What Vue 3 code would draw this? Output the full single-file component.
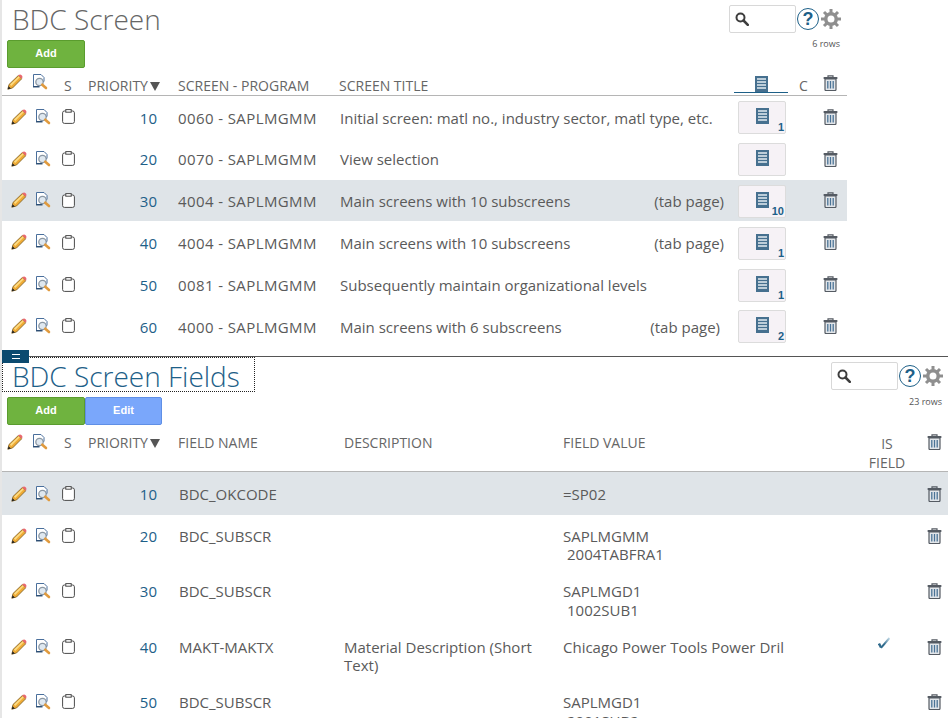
<script setup>
const screens = [
  { pri: 10, prog: "0060 - SAPLMGMM", title: "Initial screen: matl no., industry sector, matl type, etc.", tag: "", count: "1" },
  { pri: 20, prog: "0070 - SAPLMGMM", title: "View selection", tag: "", count: "" },
  { pri: 30, prog: "4004 - SAPLMGMM", title: "Main screens with 10 subscreens", tag: "(tab page)", count: "10", active: true },
  { pri: 40, prog: "4004 - SAPLMGMM", title: "Main screens with 10 subscreens", tag: "(tab page)", count: "1" },
  { pri: 50, prog: "0081 - SAPLMGMM", title: "Subsequently maintain organizational levels", tag: "", count: "1" },
  { pri: 60, prog: "4000 - SAPLMGMM", title: "Main screens with 6 subscreens", tag: "(tab page)", count: "2", shifted: true },
];

const fields = [
  { pri: 10, name: "BDC_OKCODE", desc: "", value: ["=SP02"], active: true },
  { pri: 20, name: "BDC_SUBSCR", desc: "", value: ["SAPLMGMM", "2004TABFRA1"] },
  { pri: 30, name: "BDC_SUBSCR", desc: "", value: ["SAPLMGD1", "1002SUB1"] },
  { pri: 40, name: "MAKT-MAKTX", desc: "Material Description (Short Text)", value: ["Chicago Power Tools Power Dril"], check: true },
  { pri: 50, name: "BDC_SUBSCR", desc: "", value: ["SAPLMGD1", "2001SUB2"] },
];
</script>

<template>
  <svg class="defs" width="0" height="0">
    <defs>
      <linearGradient id="check-fade" x1="0" y1="1" x2="1" y2="0">
        <stop offset="0.35" stop-color="#2f6a8c" />
        <stop offset="1" stop-color="#c4dbe8" />
      </linearGradient>
    </defs>
    <symbol id="pencil" viewBox="0 0 16 16">
      <path d="M.8 15.200l1.200-4.700 9.300-9 3.400 3.300-9.200 9.200z" fill="#f0ab35" stroke="#7a5c20" stroke-width=".8" />
      <path d="M3 10.600l8.800-8.300 1 1L4.200 12z" fill="#fcdc84" />
      <path d="M11.200 1.600Q13 -.2 14.600 1.300t.2 3.500z" fill="#e9686e" />
      <path d="M.8 15.200l.8-3 2.300 2.200z" fill="#222" />
    </symbol>
    <symbol id="inspect" viewBox="0 0 16 16">
      <path d="M1.500.5h7.500l3 3v4H8l-1 5H1.500z" fill="#fff" stroke="#4a6f9c" />
      <path d="M1 12.800h6.500" stroke="#27496d" stroke-width="1.300" />
      <circle cx="7.500" cy="8" r="3.700" fill="#dfe8f0" stroke="#8b97a3" stroke-width="1.300" />
      <path d="M10.300 10.700l3.700 3.300" stroke="#e09a3e" stroke-width="2.600" stroke-linecap="round" />
    </symbol>
    <symbol id="clip" viewBox="0 0 13 15">
      <rect x=".6" y="2" width="11.800" height="12.400" rx="1.800" fill="#fff" stroke="#4a4a4a" stroke-width="1" />
      <rect x="3.800" y=".6" width="5.400" height="2.600" fill="#fff" stroke="#4a4a4a" stroke-width="1" />
    </symbol>
    <symbol id="trash" viewBox="0 0 15 16">
      <path d="M5 2V.8h5V2" fill="none" stroke="#555b63" stroke-width="1.200" />
      <rect x=".5" y="2" width="14" height="2" rx=".8" fill="#555b63" />
      <path d="M2 4h11v10.500q0 1-1 1H3q-1 0-1-1z" fill="#e2e6ea" stroke="#555b63" stroke-width="1.200" />
      <path d="M4.800 6v7.500M7.500 6v7.500M10.200 6v7.500" stroke="#4a7396" stroke-width="1.300" />
    </symbol>
    <symbol id="doc" viewBox="0 0 13 16">
      <rect width="13" height="16" fill="#46708f" />
      <path d="M2 3h9M2 6h9M2 9h9M2 12h9" stroke="#e4ecf2" stroke-width="1.300" />
    </symbol>
    <symbol id="search" viewBox="0 0 14 14">
      <circle cx="5.500" cy="5.500" r="4" fill="none" stroke="#3d3d3d" stroke-width="2" />
      <path d="M8.500 8.500l4.300 4.300" stroke="#3d3d3d" stroke-width="2.600" stroke-linecap="round" />
    </symbol>
    <symbol id="gear" viewBox="0 0 22 22">
      <path d="M11 4a7 7 0 1 0 0 14 7 7 0 0 0 0-14zm0 3.500a3.500 3.500 0 1 1 0 7 3.500 3.500 0 0 1 0-7z" fill="#8f8f8f" fill-rule="evenodd" />
      <path d="M11 5V1M11 21v-4M5 11H1M21 11h-4M6.800 6.800L4 4M18 18l-2.800-2.800M6.800 15.200L4 18M18 4l-2.800 2.800" stroke="#8f8f8f" stroke-width="3" />
    </symbol>
    <symbol id="check" viewBox="0 0 12 12">
      <path d="M1 6.500l2 4" stroke="#2f6a8c" stroke-width="2.400" />
      <path d="M3 10.800L11.500 1" stroke="url(#check-fade)" stroke-width="2" fill="none" />
    </symbol>
  </svg>

  <div class="page">
    <section class="panel top">
      <div class="panel-head">
        <div class="title-box"><h1 class="title">BDC Screen</h1></div>
        <div class="tools">
          <div class="tool-row">
            <div class="search"><svg width="14" height="14"><use href="#search" /></svg></div>
            <span class="help">?</span>
            <svg width="22" height="22"><use href="#gear" /></svg>
          </div>
          <div class="count">6 rows</div>
        </div>
      </div>
      <div class="buttons"><button class="btn add">Add</button></div>

      <div class="thead screens-grid">
        <svg class="h-pencil" width="16" height="16"><use href="#pencil" /></svg>
        <svg class="h-inspect" width="16" height="16"><use href="#inspect" /></svg>
        <span class="h-s">S</span>
        <span class="h-pri">PRIORITY<i class="caret"></i></span>
        <span class="h-left">SCREEN - PROGRAM</span>
        <span>SCREEN TITLE</span>
        <span class="h-doc"><svg width="13" height="16"><use href="#doc" /></svg></span>
        <span class="h-c">C</span>
        <svg class="h-trash" width="15" height="16"><use href="#trash" /></svg>
      </div>

      <div v-for="row in screens" :key="row.pri" class="row screens-grid" :class="{ active: row.active }">
        <svg class="i-pencil" width="16" height="16"><use href="#pencil" /></svg>
        <svg class="i-inspect" width="16" height="16"><use href="#inspect" /></svg>
        <svg class="i-clip" width="13" height="15"><use href="#clip" /></svg>
        <span class="pri">{{ row.pri }}</span>
        <span class="left prog">{{ row.prog }}</span>
        <span class="title-cell" :class="{ shifted: row.shifted }"><span>{{ row.title }}</span><span v-if="row.tag">{{ row.tag }}</span></span>
        <span class="doc-btn">
          <svg width="13" height="16"><use href="#doc" /></svg>
          <b v-if="row.count" class="badge">{{ row.count }}</b>
        </span>
        <span></span>
        <svg class="i-trash" width="15" height="16"><use href="#trash" /></svg>
      </div>
    </section>

    <section class="panel bottom">
      <span class="handle"><i></i></span>
      <div class="panel-head">
        <div class="title-box focus"><h1 class="title blue">BDC Screen Fields</h1></div>
        <div class="tools">
          <div class="tool-row">
            <div class="search"><svg width="14" height="14"><use href="#search" /></svg></div>
            <span class="help">?</span>
            <svg width="22" height="22"><use href="#gear" /></svg>
          </div>
          <div class="count">23 rows</div>
        </div>
      </div>
      <div class="buttons">
        <button class="btn add">Add</button>
        <button class="btn edit">Edit</button>
      </div>

      <div class="thead fields-grid">
        <svg class="h-pencil" width="16" height="16"><use href="#pencil" /></svg>
        <svg class="h-inspect" width="16" height="16"><use href="#inspect" /></svg>
        <span class="h-s">S</span>
        <span class="h-pri">PRIORITY<i class="caret"></i></span>
        <span class="h-left">FIELD NAME</span>
        <span>DESCRIPTION</span>
        <span>FIELD VALUE</span>
        <span class="h-field">IS<br />FIELD</span>
        <svg class="h-trash" width="15" height="16"><use href="#trash" /></svg>
      </div>

      <div v-for="row in fields" :key="row.pri" class="row fields-grid" :class="{ active: row.active }">
        <svg class="i-pencil" width="16" height="16"><use href="#pencil" /></svg>
        <svg class="i-inspect" width="16" height="16"><use href="#inspect" /></svg>
        <svg class="i-clip" width="13" height="15"><use href="#clip" /></svg>
        <span class="pri">{{ row.pri }}</span>
        <span class="left">{{ row.name }}</span>
        <span class="desc">{{ row.desc }}</span>
        <span>
          <span v-for="(line, i) in row.value" :key="i" class="value-line" :class="{ indent: i > 0 }">{{ line }}</span>
        </span>
        <span class="check-cell"><svg v-if="row.check" width="12" height="12"><use href="#check" /></svg></span>
        <svg class="i-trash" width="15" height="16"><use href="#trash" /></svg>
      </div>
    </section>
  </div>
</template>

<style>
html, body { margin: 0; background: #fff; overflow: hidden; }
</style>

<style scoped>
.defs { position: absolute; }
.page {
  width: 948px;
  height: 718px;
  overflow: hidden;
  font-family: "Open Sans", "Noto Sans", sans-serif;
  font-size: 15px;
  line-height: 18.500px;
  color: #5a5a5a;
  box-sizing: border-box;
  border-left: 2px solid #e6e6e6;
}
.panel { position: relative; }
.top { height: 356px; border-bottom: 1px solid #555; width: 946px; }
.bottom { width: 946px; }
.panel-head { display: flex; justify-content: space-between; width: 100%; }
.top .panel-head { width: 844px; height: 40px; }
.bottom .panel-head { height: 40px; }
.title-box { padding: 0 13px 0 10px; height: 35px; }
.title-box.focus { outline: 1px dotted #222; outline-offset: -1px; width: 230px; height: 35px; }
.title {
  margin: 0;
  font-family: "Open Sans", sans-serif;
  font-weight: 300;
  font-size: 28px;
  line-height: 39px;
  color: #666;
  white-space: nowrap;
}
.title.blue { color: #1d6088; }
.tools { display: flex; flex-direction: column; align-items: flex-end; padding: 5px 4px 0 0; }
.tool-row { display: flex; align-items: center; gap: 1px; }
.search {
  height: 26px;
  border: 1px solid #d8d8d8;
  border-radius: 2px;
  display: flex;
  align-items: center;
  padding-left: 5px;
  width: 60px;
}
.help {
  width: 20px;
  height: 20px;
  border: 1.500px solid #1d6088;
  border-radius: 50%;
  color: #1d6088;
  font: bold 18px/20px "Liberation Sans", sans-serif;
  text-align: center;
}
.count { font-size: 9px; line-height: 12px; margin: 5px 2px 0 0; color: #555; }
.bottom .count { margin-top: 6px; }
.buttons { display: flex; padding-left: 5px; height: 29px; }
.btn {
  width: 78px;
  height: 28px;
  border-radius: 2px;
  color: #fff;
  font: bold 11px "Liberation Sans", sans-serif;
  padding: 0 0 2px;
}
.add { background: #6fb33f; border: 1px solid #5a9c2e; }
.edit { background: #7aa7fb; border: 1px solid #5f8fe6; width: 77px; }
.top .thead { height: 27px; width: 845px; }
.thead {
  position: relative;
  align-items: end;
  border-bottom: 1px solid #b5b5b5;
  font-size: 14px;
  color: #666;
  box-sizing: border-box;
}
.bottom .thead { height: 46px; align-items: start; padding-top: 8px; }
.screens-grid {
  display: grid;
  grid-template-columns: 30px 28px 22px 75px 182px 390px 65px 20px 33px;
}
.fields-grid {
  display: grid;
  grid-template-columns: 30px 28px 22px 75px 187px 219px 284px 80px 19px;
}
.row { width: 845px; height: 41.800px; align-items: center; padding-top: 2px; box-sizing: border-box; }
.bottom .row { width: 946px; height: 55.500px; align-items: start; padding-top: 11.500px; }
.bottom .row.active { height: 43px; padding-top: 12.500px; }
.active { background: #dfe4e8; }
.pri { color: #1d6088; text-align: right; }
.left { padding-left: 22px; white-space: nowrap; }
.prog { padding-left: 21px; letter-spacing: .4px; }
.title-cell { display: flex; justify-content: space-between; padding-right: 5px; white-space: nowrap; padding-left: 1px; }
.title-cell.shifted { padding-right: 9px; }
.desc { padding-right: 6px; }
.i-pencil { margin-left: 9px; margin-top: -2px; }
.i-inspect { margin-left: 3px; margin-top: -2px; }
.i-clip { margin-left: 2px; margin-top: -2px; }
.i-trash { margin-left: 9px; margin-top: -2px; }
.bottom .i-pencil, .bottom .i-inspect, .bottom .i-clip, .bottom .i-trash { margin-top: 1px; }
.bottom .i-trash { margin-left: 0; }
.h-pencil { margin-left: 5px; align-self: center; }
.h-inspect { align-self: center; }
.bottom .h-pencil, .bottom .h-inspect, .bottom .h-trash { align-self: start; margin-top: 0; }
.h-s { margin-left: 4px; }
.h-pri { margin-left: 6px; white-space: nowrap; position: relative; }
.h-left { padding-left: 21px; white-space: nowrap; }
.h-doc { text-align: center; border-bottom: 1px solid #1d6088; margin-right: 6px; margin-left: 5px; margin-bottom: 2px; line-height: 0; }
.h-c { margin-left: 5px; }
.h-trash { margin-left: 9px; align-self: center; margin-top: 1px; }
.bottom .h-trash { margin-left: 0; }
.h-field { text-align: center; line-height: 19px; white-space: nowrap; }
.caret {
  display: inline-block;
  border-left: 5.500px solid transparent;
  border-right: 5.500px solid transparent;
  border-top: 9px solid #555;
  margin-left: 2px;
}
.doc-btn {
  position: relative;
  display: flex;
  justify-content: center;
  width: 48px;
  height: 33px;
  margin-left: 9px;
  padding-top: 6px;
  box-sizing: border-box;
  background: #f6f2f6;
  border: 1px solid #dcdcdc;
  border-radius: 2px;
}
.badge {
  position: absolute;
  right: 1px;
  bottom: 0;
  color: #1d6088;
  font: bold 11px/11px "Liberation Sans", sans-serif;
}
.value-line { display: block; }
.value-line.indent { padding-left: 4px; }
.check-cell { text-align: center; padding-right: 6px; line-height: 0; margin-top: -1px; }
.handle {
  position: absolute;
  left: 0;
  top: -7px;
  width: 27px;
  height: 13px;
  background: #0b4a6f;
  display: flex;
  align-items: center;
  justify-content: center;
  z-index: 1;
}
.handle i { width: 8px; height: 3px; border-top: 1px solid #fff; border-bottom: 1px solid #fff; }
</style>
